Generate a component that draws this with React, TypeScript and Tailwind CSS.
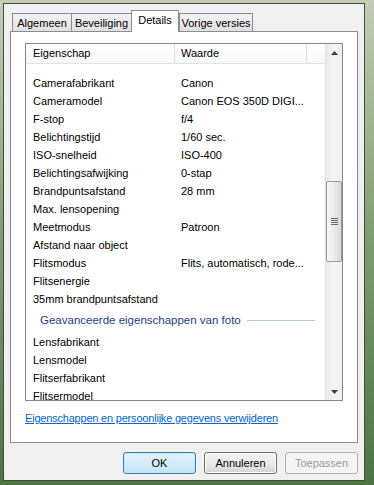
const rows: [string, string][] = [
  ['Camerafabrikant', 'Canon'],
  ['Cameramodel', 'Canon EOS 350D DIGI...'],
  ['F-stop', 'f/4'],
  ['Belichtingstijd', '1/60 sec.'],
  ['ISO-snelheid', 'ISO-400'],
  ['Belichtingsafwijking', '0-stap'],
  ['Brandpuntsafstand', '28 mm'],
  ['Max. lensopening', ''],
  ['Meetmodus', 'Patroon'],
  ['Afstand naar object', ''],
  ['Flitsmodus', 'Flits, automatisch, rode...'],
  ['Flitsenergie', ''],
  ['35mm brandpuntsafstand', ''],
]

const advanced = ['Lensfabrikant', 'Lensmodel', 'Flitserfabrikant', 'Flitsermodel']

function Row({ label, value }: { label: string; value?: string }) {
  return (
    <div className="flex h-[18px] shrink-0 items-center whitespace-nowrap">
      <span className="w-[149px] pl-[7px]">{label}</span>
      <span className="pl-[6px]">{value}</span>
    </div>
  )
}

function Tab({ label, width, active }: { label: string; width: string; active?: boolean }) {
  if (active) {
    return (
      <div
        className={`relative z-10 -mb-px flex h-[22px] items-start justify-center border border-b-0 border-[#898c95] bg-white pt-[4px] ${width}`}
      >
        {label}
      </div>
    )
  }
  return (
    <div
      className={`flex h-[18px] items-center justify-center border border-b-0 border-[#898c95] bg-gradient-to-b from-[#f3f3f3] to-[#e0e0e0] pt-[2px] ${width}`}
    >
      {label}
    </div>
  )
}

function ScrollBar() {
  return (
    <div className="flex w-[17px] flex-col border-l border-[#e2e2e2] bg-gradient-to-r from-[#e9e9e9] via-[#f5f5f5] to-[#eeeeee]">
      <div className="flex h-[17px] items-center justify-center">
        <svg width="7" height="4" viewBox="0 0 7 4">
          <path d="M3.5 0 L7 4 L0 4 Z" fill="#3f3f3f" />
        </svg>
      </div>
      <div className="mt-[120px] flex h-[81px] w-[16px] items-center justify-center rounded-[2px] border border-[#9a9a9a] bg-gradient-to-r from-[#f7f7f7] via-[#ececec] to-[#d9d9d9]">
        <div className="flex flex-col gap-px">
          <div className="h-px w-[7px] bg-[#6b6b6b]" />
          <div className="h-px w-[7px] bg-[#6b6b6b]" />
          <div className="h-px w-[7px] bg-[#6b6b6b]" />
          <div className="h-px w-[7px] bg-[#6b6b6b]" />
        </div>
      </div>
      <div className="mt-auto flex h-[17px] items-center justify-center">
        <svg width="7" height="4" viewBox="0 0 7 4">
          <path d="M0 0 L7 0 L3.5 4 Z" fill="#3f3f3f" />
        </svg>
      </div>
    </div>
  )
}

export default function App() {
  return (
    <div className="h-[485px] w-[374px] overflow-hidden bg-gradient-to-b from-[#c3ccb8] via-[#7f9c70] to-[#4d7342] pl-[3px] pt-[3px] font-['Liberation_Sans',Arial,sans-serif] text-[11px] leading-none text-black">
      <div className="flex h-[478px] w-[362px] flex-col border border-[#3f4c38] bg-[#f0f0f0] px-[6px]">
        {/* tabs */}
        <div className="mt-[6px] flex h-[21px] items-end pl-[2px]">
          <Tab label="Algemeen" width="w-[60px]" />
          <Tab label="Beveiliging" width="w-[61px] -ml-px" />
          <Tab label="Details" width="w-[48px] -ml-px" active />
          <Tab label="Vorige versies" width="w-[74px]" />
        </div>

        {/* tab panel */}
        <div className="flex h-[412px] flex-col border border-[#898c95] bg-white px-[14px] pt-[11px]">
          <div className="flex h-[358px] border border-[#828790] bg-white">
            <div className="flex flex-1 flex-col overflow-hidden">
              <div className="flex h-[20px] shrink-0 items-center border-b border-[#e3e3e3] bg-gradient-to-b from-white to-[#f7f8f9]">
                <div className="flex h-full w-[149px] items-center border-r border-[#dcdcdc] pl-[7px]">Eigenschap</div>
                <div className="flex h-full w-[132px] items-center border-r border-[#dcdcdc] pl-[6px]">Waarde</div>
                <div className="flex-1" />
              </div>
              <div className="h-[10px] shrink-0" />
              {rows.map(([l, v]) => (
                <Row key={l} label={l} value={v} />
              ))}
              <div className="flex h-[25px] shrink-0 items-center pl-[14px] text-[11.5px] text-[#1e3c8c]">
                <span className="whitespace-nowrap">Geavanceerde eigenschappen van foto</span>
                <div className="ml-[6px] mr-[10px] h-px flex-1 bg-[#b9c6df]" />
              </div>
              {advanced.map((l) => (
                <Row key={l} label={l} />
              ))}
            </div>
            <ScrollBar />
          </div>
          <a href="#" className="mt-[12px] self-start tracking-[-0.2px] text-[#0066cc] underline">
            Eigenschappen en persoonlijke gegevens verwijderen
          </a>
        </div>

        {/* buttons */}
        <div className="mt-[9px] flex justify-end gap-[8px]">
          <button className="h-[22px] w-[73px] rounded-[3px] border border-[#3c7fb1] bg-gradient-to-b from-[#e5f4fc] to-[#c4e5f6] shadow-[inset_0_0_0_1px_#bfe6fa]">
            OK
          </button>
          <button className="h-[22px] w-[73px] rounded-[3px] border border-[#707070] bg-gradient-to-b from-[#f2f2f2] via-[#ebebeb] to-[#d4d4d4] shadow-[inset_0_0_0_1px_#fcfcfc]">
            Annuleren
          </button>
          <button className="h-[22px] w-[73px] rounded-[3px] border border-[#adb2b5] bg-[#f4f4f4] text-[#9a9a9a]">
            Toepassen
          </button>
        </div>
      </div>
    </div>
  )
}
